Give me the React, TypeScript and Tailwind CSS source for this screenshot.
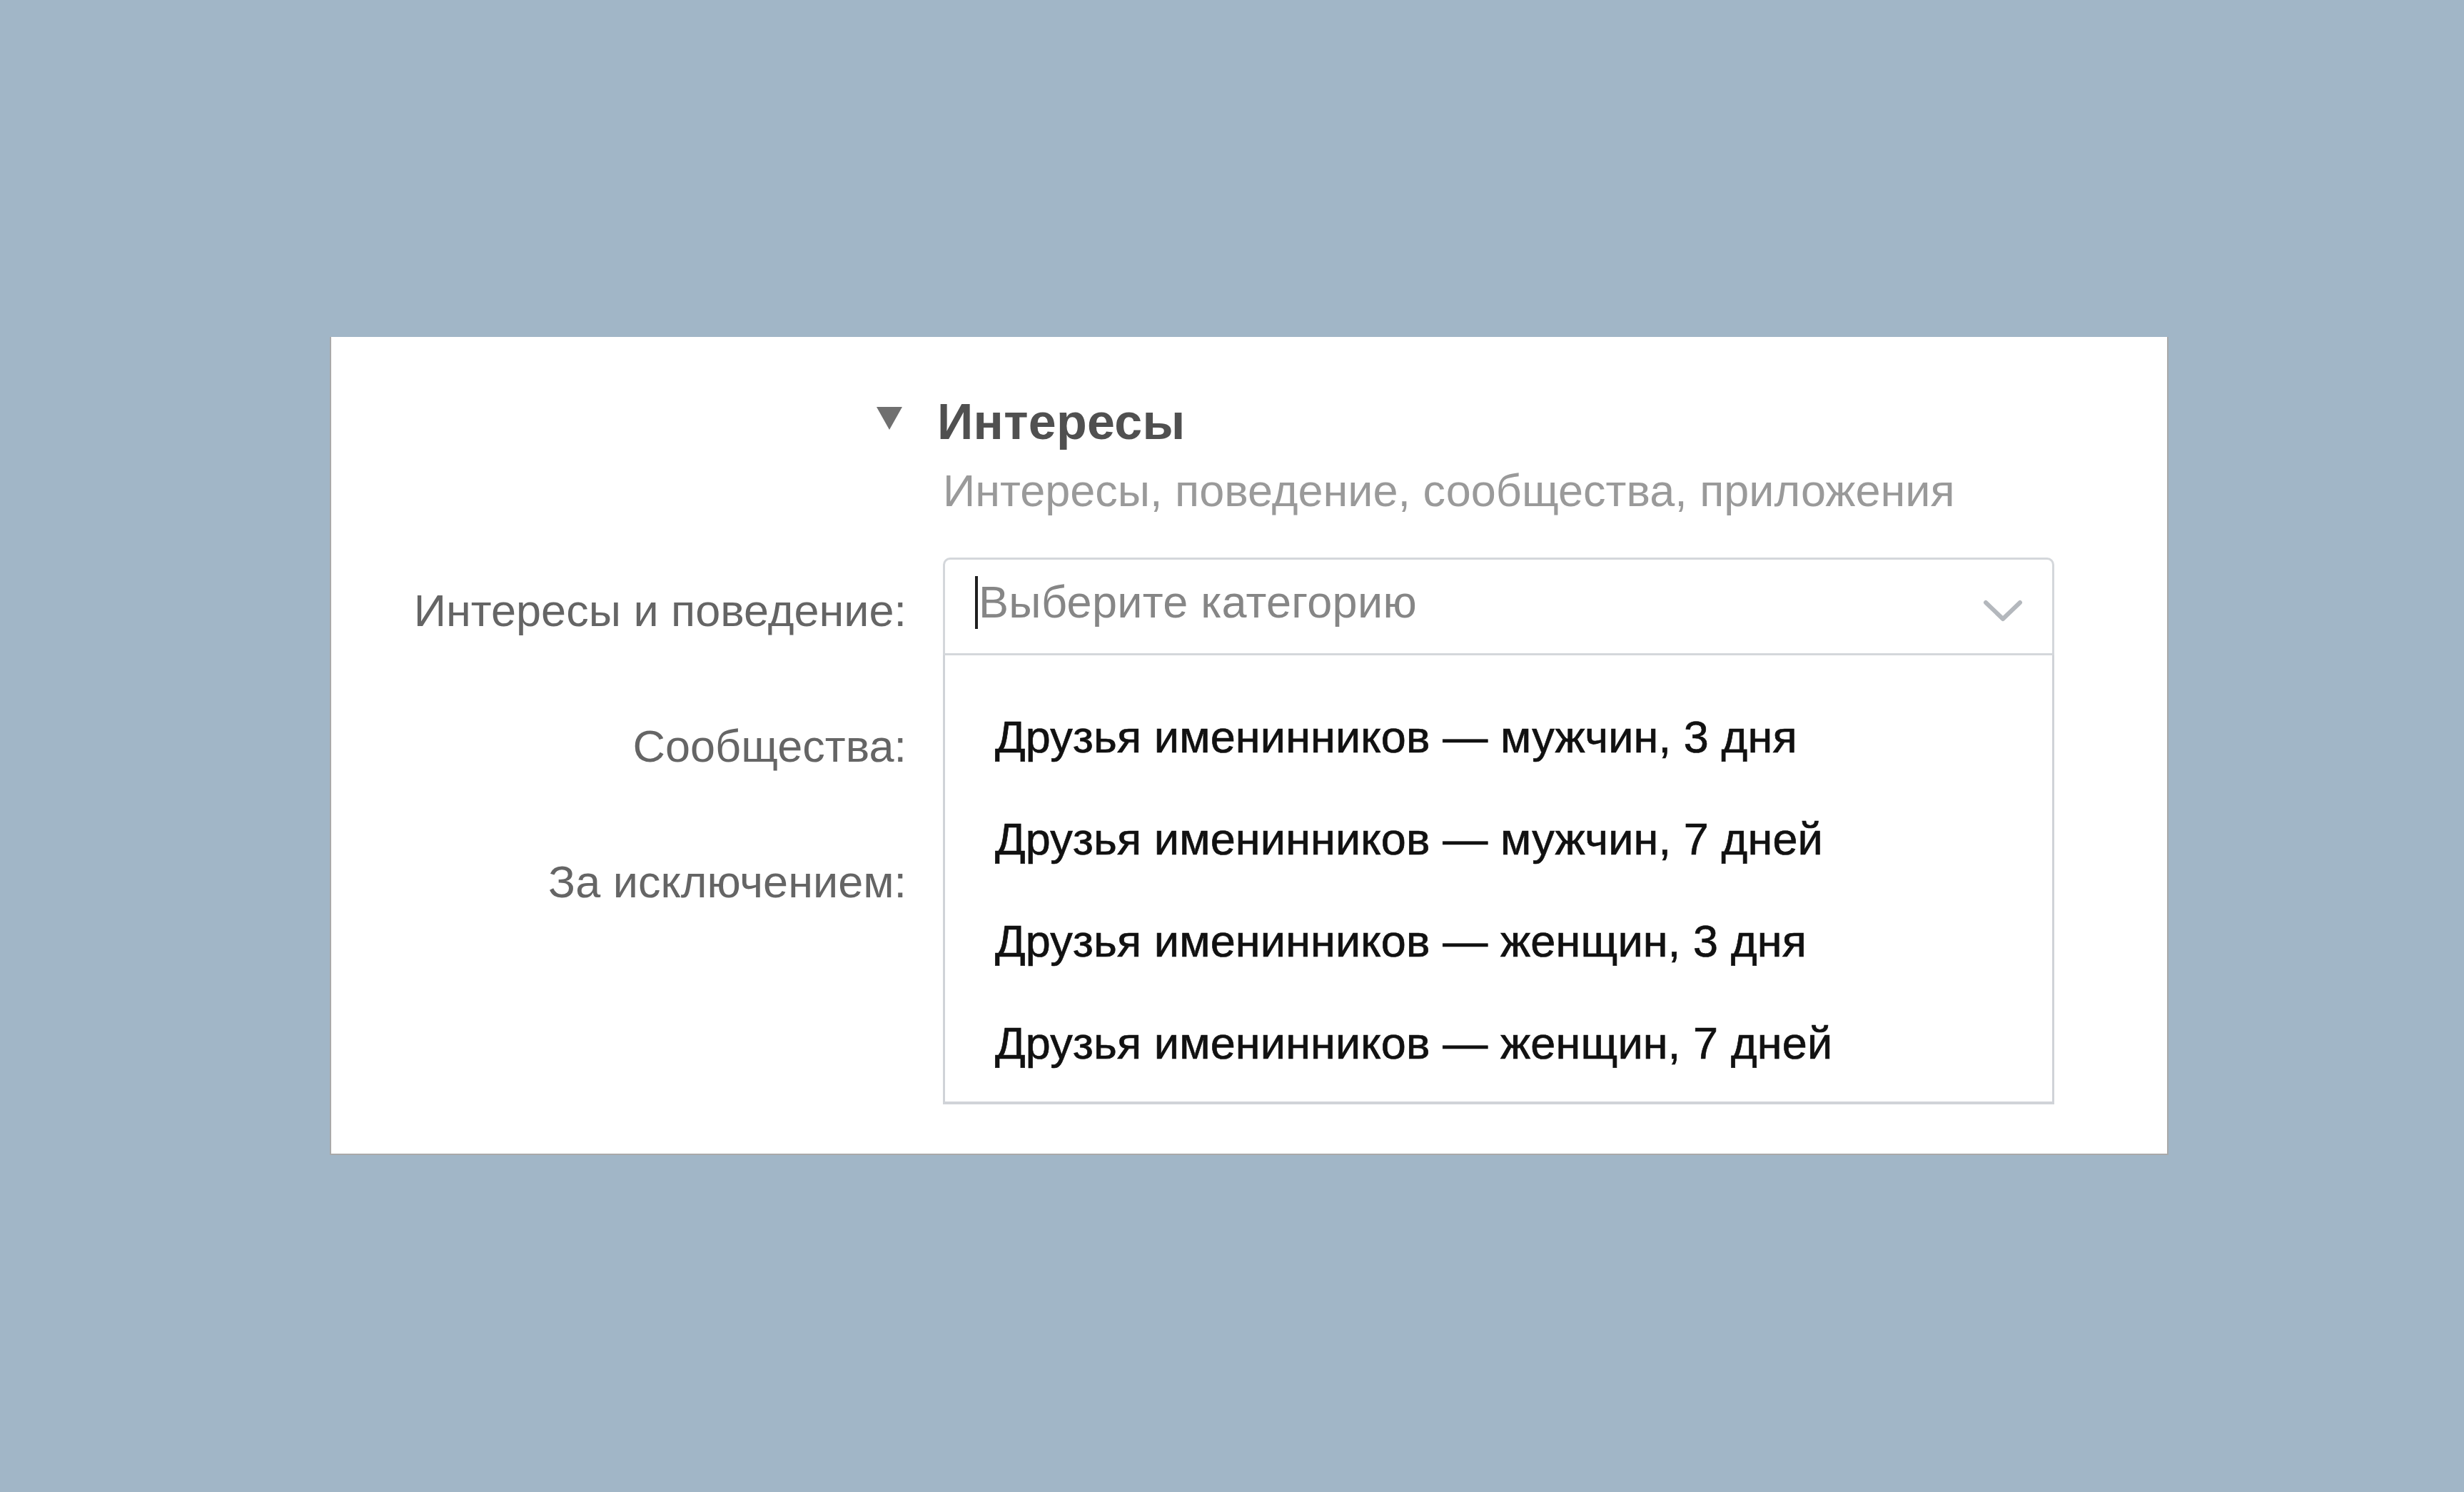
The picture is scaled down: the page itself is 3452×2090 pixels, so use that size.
import React from "react";

const ITEMS = [
  "Друзья именинников — мужчин, 3 дня",
  "Друзья именинников — мужчин, 7 дней",
  "Друзья именинников — женщин, 3 дня",
  "Друзья именинников — женщин, 7 дней",
];

function FieldRow({ label, children, className = "" }: { label: string; children: React.ReactNode; className?: string }) {
  return (
    <div className={`flex gap-[51px] ${className}`}>
      <div className="w-[806px] pt-[38px] text-right text-[63px] leading-[72px] text-[#656565]">{label}</div>
      {children}
    </div>
  );
}

export default function App() {
  return (
    <div className="min-h-screen w-full bg-[#a1b6c7] pl-[462px] pt-[472px] font-['Liberation_Sans',Arial,sans-serif]">
      <div className="w-[2576px] border-x-2 border-b-2 border-[#a9a9a9] bg-white pt-[79px] pb-[318px]">
        {/* Section header */}
        <div className="flex gap-[43px]">
          <div className="flex w-[806px] justify-end pr-[6px] pt-[19px]">
            <svg width="36" height="32" viewBox="0 0 36 32">
              <polygon points="0,0 36,0 18,32" fill="#707070" />
            </svg>
          </div>
          <h2 className="text-[70px] font-bold leading-[80px] tracking-[0.3px] text-[#505050]">Интересы</h2>
        </div>

        <div className="mt-[20px] flex gap-[51px]">
          <div className="w-[806px]" />
          <p className="text-[63px] leading-[72px] text-[#9a9a9a]">Интересы, поведение, сообщества, приложения</p>
        </div>

        {/* Interests select, open */}
        <FieldRow label="Интересы и поведение:" className="mt-[58px]">
          <div className="relative w-[1557px]">
            <div className="flex h-[137px] items-start justify-between rounded-t-[10px] border-[3px] border-[#d4d7db] bg-white pt-[23px] pl-[42px] pr-[41px]">
              <div className="flex items-start">
                <span className="block h-[74px] w-[4px] bg-[#1f1f1f]" />
                <span className="ml-[1px] text-[63px] leading-[72px] tracking-[0.3px] text-[#868686]">Выберите категорию</span>
              </div>
              <svg className="mt-[33px]" width="56" height="32" viewBox="0 0 56 32" fill="none">
                <polyline points="4,4 28,27 52,4" stroke="#b4b8bd" strokeWidth="6" strokeLinecap="round" strokeLinejoin="round" />
              </svg>
            </div>

            {/* Dropdown */}
            <div className="absolute left-0 right-0 top-full z-10 border-x-[3px] border-b-[4px] border-[#d0d3d8] bg-white pt-[43px] pb-[10px] pl-[70px]">
              {ITEMS.map((item) => (
                <div
                  key={item}
                  className="text-[63px] leading-[143px] tracking-[0.15px] text-[#111111] [-webkit-text-stroke:0.7px_#111111]"
                >
                  {item}
                </div>
              ))}
            </div>
          </div>
        </FieldRow>

        <FieldRow label="Сообщества:" className="mt-[53px]">
          <div className="h-[137px] w-[1557px] rounded-t-[10px] border-[3px] border-[#d4d7db]" />
        </FieldRow>

        <FieldRow label="За исключением:" className="mt-[53px]">
          <div className="h-[137px] w-[1557px] rounded-t-[10px] border-[3px] border-[#d4d7db]" />
        </FieldRow>
      </div>
    </div>
  );
}
